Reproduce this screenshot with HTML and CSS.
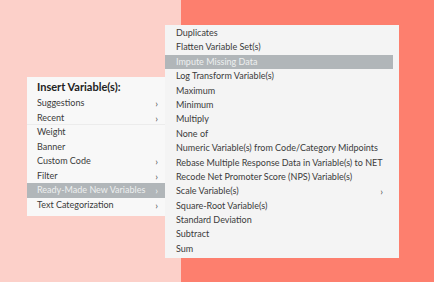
FILE: index.html
```html
<!DOCTYPE html>
<html>
<head>
<meta charset="utf-8">
<link rel="stylesheet" href="styles.css">
</head>
<body>
<div class="stage">
  <div class="bg-left"></div>
  <div class="bg-right"></div>

  <div class="menu main-menu">
    <div class="title">Insert Variable(s):</div>
    <div class="item">Suggestions<span class="arrow">›</span></div>
    <div class="item sep">Recent<span class="arrow">›</span></div>
    <div class="item">Weight</div>
    <div class="item">Banner</div>
    <div class="item">Custom Code<span class="arrow">›</span></div>
    <div class="item">Filter<span class="arrow">›</span></div>
    <div class="item active">Ready-Made New Variables<span class="arrow">›</span></div>
    <div class="item">Text Categorization<span class="arrow">›</span></div>
  </div>

  <div class="menu sub-menu">
    <div class="item">Duplicates</div>
    <div class="item">Flatten Variable Set(s)</div>
    <div class="item active">Impute Missing Data</div>
    <div class="item">Log Transform Variable(s)</div>
    <div class="item">Maximum</div>
    <div class="item">Minimum</div>
    <div class="item">Multiply</div>
    <div class="item">None of</div>
    <div class="item">Numeric Variable(s) from Code/Category Midpoints</div>
    <div class="item">Rebase Multiple Response Data in Variable(s) to NET</div>
    <div class="item">Recode Net Promoter Score (NPS) Variable(s)</div>
    <div class="item">Scale Variable(s)<span class="arrow">›</span></div>
    <div class="item">Square-Root Variable(s)</div>
    <div class="item">Standard Deviation</div>
    <div class="item">Subtract</div>
    <div class="item">Sum</div>
  </div>
</div>
</body>
</html>
```

FILE: styles.css
```css
html, body {
  margin: 0;
  padding: 0;
  width: 434px;
  height: 282px;
  overflow: hidden;
}
body {
  font-family: "Lato", "Open Sans", sans-serif;
}
.stage {
  position: relative;
  display: flex;
  width: 434px;
  height: 282px;
}
.bg-left {
  width: 181px;
  background: #fcd0c9;
}
.bg-right {
  flex: 1;
  background: #fd7f6e;
}
.menu {
  position: absolute;
  box-sizing: border-box;
  color: #3b3b3b;
  font-size: 9px;
}
.main-menu {
  left: 27px;
  top: 77px;
  width: 138px;
  height: 139px;
  background: #f8f8f8;
}
.main-menu .title {
  height: 19px;
  line-height: 20px;
  padding-left: 10px;
  font-size: 11px;
  font-weight: 700;
  color: #222;
}
.main-menu .item {
  height: 14.5px;
  line-height: 14.5px;
  padding-left: 10px;
  padding-right: 7px;
  display: flex;
  justify-content: space-between;
}
.main-menu .item.sep {
  border-bottom: 1px solid #ececec;
  height: 13.5px;
}
.sub-menu {
  left: 165px;
  top: 25px;
  width: 234px;
  height: 233px;
  background: #f4f4f4;
  padding-top: 1px;
}
.sub-menu .item {
  height: 14.4px;
  line-height: 14.8px;
  padding-left: 11px;
  padding-right: 10px;
  margin-right: 6px;
  display: flex;
  justify-content: space-between;
  white-space: nowrap;
}
.item.active {
  background: #b1b6b9;
  color: #eef0f0;
}
.arrow {
  font-size: 10px;
  color: #555;
}
.item.active .arrow {
  color: #eef0f0;
}
```
